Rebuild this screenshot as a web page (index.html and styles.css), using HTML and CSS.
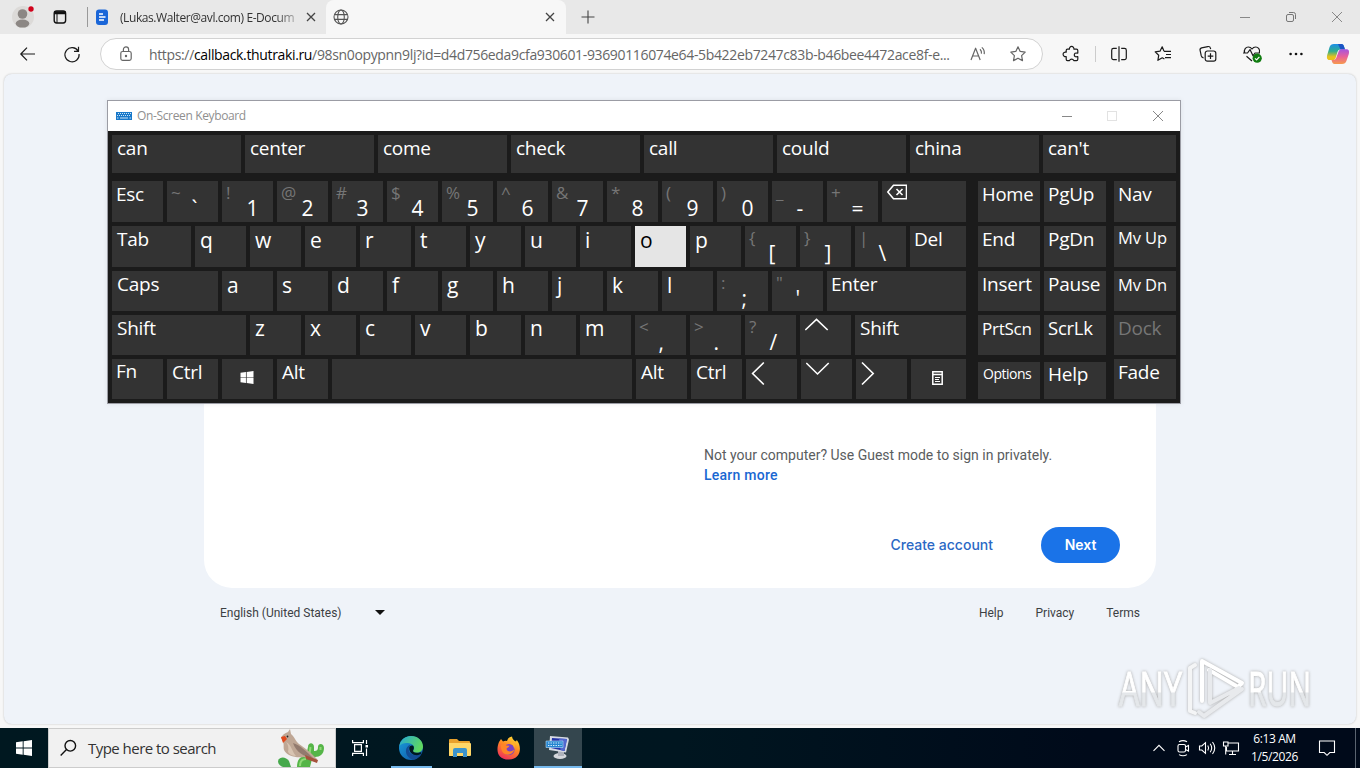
FILE: index.html
```html
<!DOCTYPE html>
<html lang="en">

<head>
    <meta charset="UTF-8">
    <meta name="viewport" content="width=device-width, initial-scale=1.0">
    <title>Desktop</title>
    <link rel="stylesheet" href="styles.css">
</head>

<body>
    <div class="desktop">

        <!-- Tab strip -->
        <div class="tab-strip">
            <div class="profile">
                <svg width="24" height="24" viewBox="0 0 24 24">
                    <circle cx="11" cy="12" r="11" fill="#dcdad8"/>
                    <circle cx="10.500" cy="9" r="4.800" fill="#8c8784"/>
                    <ellipse cx="10.500" cy="18.600" rx="6.800" ry="4" fill="#8c8784"/>
                    <circle cx="19" cy="4" r="3.200" fill="#e8e8e8"/>
                    <circle cx="19" cy="4" r="2.700" fill="#d0021b"/>
                </svg>
            </div>
            <div class="workspaces">
                <svg width="16" height="16" viewBox="0 0 16 16" fill="none" stroke="#111" stroke-width="1.4">
                    <rect x="2.200" y="2" width="11.400" height="12" rx="2.400"/>
                    <path d="M2.200 4.200h11.400M2.200 3.200h11.400" stroke-width="2"/>
                    <path d="M5 5v9" stroke-width="1"/>
                </svg>
            </div>
            <div class="strip-line"></div>
            <div class="tab">
                <svg class="tab-icon" width="14" height="18" viewBox="0 0 14 18">
                    <rect x="1" y="1.500" width="12" height="15.500" rx="3" fill="#1a66d8"/>
                    <path d="M4 6h4M4 9h6.500M4 12h5" stroke="#fff" stroke-width="1.500"/>
                </svg>
                <span class="tab-title">(Lukas.Walter@avl.com) E-Docum</span>
                <svg class="tab-close" width="10" height="10" viewBox="0 0 10 10" stroke="#444" stroke-width="1.300"><path d="M1 1l8 8M9 1l-8 8"/></svg>
            </div>
            <div class="tab tab-active">
                <svg class="globe" width="16" height="16" viewBox="0 0 16 16" fill="none" stroke="#555" stroke-width="1.100">
                    <circle cx="8" cy="8" r="7"/>
                    <ellipse cx="8" cy="8" rx="3.300" ry="7"/>
                    <path d="M1.600 5.600h12.800M1.600 10.400h12.800"/>
                </svg>
                <svg class="tab-close" width="10" height="10" viewBox="0 0 10 10" stroke="#444" stroke-width="1.300"><path d="M1 1l8 8M9 1l-8 8"/></svg>
            </div>
            <svg class="new-tab" width="14" height="14" viewBox="0 0 14 14" stroke="#444" stroke-width="1.100"><path d="M7 .5v13M.5 7h13"/></svg>
            <div class="window-buttons">
                <svg width="12" height="12" viewBox="0 0 12 12" stroke="#888"><path d="M1 6.500h10"/></svg>
                <svg width="12" height="12" viewBox="0 0 12 12" fill="none" stroke="#777"><rect x="1.500" y="3.500" width="7" height="7" rx="1.500"/><path d="M4 1.500h4.500a2 2 0 0 1 2 2V8"/></svg>
                <svg width="12" height="12" viewBox="0 0 12 12" stroke="#888"><path d="M1 1l10 10M11 1L1 11"/></svg>
            </div>
        </div>

        <!-- Toolbar -->
        <div class="toolbar">
            <div class="tool"><svg width="20" height="20" viewBox="0 0 20 20"><path d="M17 10H3.200M9 3.600L2.800 10 9 16.400"/></svg></div>
            <div class="tool"><svg width="20" height="20" viewBox="0 0 20 20"><path d="M16.200 7.200A7.100 7.100 0 1 0 17.100 10M16.500 2.800v4.600H12"/></svg></div>
            <div class="address-bar">
                <svg class="lock" width="16" height="18" viewBox="0 0 16 18"><rect x="2.800" y="6.500" width="10.400" height="8.800" rx="1.800"/><path d="M5.400 6.500V4.400a2.600 2.600 0 0 1 5.200 0v2.100"/><circle cx="8" cy="11" r=".6" fill="#444"/></svg>
                <span class="url">https://<b>callback.thutraki.ru</b>/98sn0opypnn9lj?id=d4d756eda9cfa930601-93690116074e64-5b422eb7247c83b-b46bee4472ace8f-e...</span>
                <svg class="read" width="18" height="18" viewBox="0 0 18 18"><path d="M2 15L6.600 3.200 11.200 15M3.700 11h5.800M11 4.200q1.900 1.800 1.400 4.400M12.800 2.400q3.100 2.600 2.400 6.800"/></svg>
                <svg class="star" width="18" height="18" viewBox="0 0 18 18"><path d="M9 1.800l2.200 4.600 5 .7-3.600 3.500.9 5L9 13.200l-4.500 2.400.9-5L1.800 7.100l5-.7z"/></svg>
            </div>
            <div class="tool"><svg width="20" height="20" viewBox="0 0 20 20"><path d="M7.400 5.200a2.300 2.300 0 1 1 4.500 0h2.600q1.300 0 1.300 1.300v2.600h-1a1.900 1.900 0 1 0 0 3.600h1v2.600q0 1.300-1.300 1.300h-2.700a2.300 2.300 0 0 0-4.300 0H5.400q-1.200 0-1.200-1.300v-2.800a2.300 2.300 0 1 1 0-4.300V6.500q0-1.300 1.200-1.300z"/></svg></div>
            <div class="tool-line"></div>
            <div class="tool"><svg width="20" height="20" viewBox="0 0 20 20"><path d="M10 2.200v15.600M7.800 4.400H4.500a1.800 1.800 0 0 0-1.800 1.800v7.600a1.800 1.800 0 0 0 1.800 1.800h3.300M12.200 4.400h3.300a1.800 1.800 0 0 1 1.800 1.800v7.600a1.800 1.800 0 0 1-1.800 1.800h-3.300"/></svg></div>
            <div class="tool"><svg width="20" height="20" viewBox="0 0 20 20"><path d="M11 7.300h7M13 10.500h5M12 13.700h6M11 7.200L9.200 2.800 7 7.200l-4.800.7 3.500 3.400-.8 5 4.400-2.500 2.100 1.200"/></svg></div>
            <div class="tool"><svg width="20" height="20" viewBox="0 0 20 20"><rect x="7.200" y="7" width="10.600" height="10.200" rx="2.200"/><path d="M12.500 9.300v5.600M9.700 12.100h5.600M5.600 13.800c-1.200-.1-2-.8-2.300-1.900L2.100 6.400c-.3-1.200.4-2.200 1.500-2.500l6.200-1.300c1.300-.3 2.400.5 2.700 1.700l.1.800"/></svg></div>
            <div class="tool"><svg width="20" height="20" viewBox="0 0 20 20"><path d="M2.700 9C1.500 5.400 4 3 6.300 3c1.800 0 3 1 3.700 2 .7-1 1.900-2 3.700-2 2.500 0 4.600 2.500 3.700 5.600M4.500 12.200L10 17M1 9h4.500L8 5.600l3 6.200 2-2.800h5"/><circle cx="15.200" cy="14.200" r="4.600" fill="#107c10" stroke="none"/><path d="M13 14.300l1.600 1.600 2.800-3.100" stroke="#fff"/></svg></div>
            <div class="tool"><svg width="20" height="20" viewBox="0 0 20 20"><g fill="#111" stroke="none"><circle cx="4.600" cy="10" r="1.300"/><circle cx="10" cy="10" r="1.300"/><circle cx="15.400" cy="10" r="1.300"/></g></svg></div>
            <div class="tool copilot">
                <svg width="24" height="24" viewBox="0 0 24 24">
                    <defs>
                        <linearGradient id="cpA" x1="0" y1="0" x2="0" y2="1"><stop offset="0" stop-color="#1d8ee8"/><stop offset=".45" stop-color="#2fae8e"/><stop offset=".8" stop-color="#e8c21c"/></linearGradient>
                        <linearGradient id="cpB" x1="0" y1="0" x2="0" y2="1"><stop offset="0" stop-color="#a453e0"/><stop offset=".5" stop-color="#e8609a"/><stop offset="1" stop-color="#f79a4c"/></linearGradient>
                    </defs>
                    <path d="M8 2h7.500c1.500 0 2 1 2.500 2.500l1 3h-4.500c-2 0-2.600 1-3.200 3l-1.500 5c-.6 2-1.600 2.500-3 2.500H3.500C.8 18 .6 15.500 1.200 13L3.600 5C4.300 3 5.600 2 8 2z" fill="url(#cpA)" stroke="none"/>
                    <path d="M12 2h3.500c1.500 0 2 1 2.500 2.500l1 3h-4.500z" fill="#1b54c4" stroke="none"/>
                    <path d="M16 22H8.500c-1.500 0-2-1-2.500-2.500l-.5-1.500H7c2 0 3-1 3.600-3l1.800-5c.7-2 1.600-2.800 3-2.800h5c2.700 0 3 2.300 2.400 4.800L20.400 19c-.7 2-2 3-4.400 3z" fill="url(#cpB)" stroke="none"/>
                </svg>
            </div>
        </div>

        <!-- Sign in page -->
        <div class="viewport">
            <div class="page">
                <div class="card">
                    <p class="guest">Not your computer? Use Guest mode to sign in privately.<br><a>Learn more</a></p>
                    <div class="actions">
                        <a class="create">Create account</a>
                        <button class="next">Next</button>
                    </div>
                </div>
                <div class="footer">
                    <span class="lang">English (United States)</span>
                    <span class="caret"></span>
                    <div class="links"><span>Help</span><span>Privacy</span><span>Terms</span></div>
                </div>
            </div>
        </div>

        <!-- Taskbar -->
        <div class="taskbar">
            <div class="start">
                <svg width="16" height="16" viewBox="0 0 16 16" fill="#fff"><path d="M0 2.300L6.700 1.300V7.600H0zM7.600 1.200L16 0v7.600H7.600zM0 8.400h6.700v6.300L0 13.700zM7.600 8.400H16V16l-8.400-1.200z"/></svg>
            </div>
            <div class="search">
                <svg width="18" height="18" viewBox="0 0 18 18" fill="none" stroke="#111" stroke-width="1.400"><circle cx="10.300" cy="6.800" r="5.300"/><path d="M6.500 10.600L.7 16.400"/></svg>
                <span>Type here to search</span>
                <svg class="bird" width="50" height="38" viewBox="0 0 50 38">
                    <path d="M1 32c2-5 8-4 11 0l2 6H6c-3-1-5-3-5-6z" fill="#46a94c"/>
                    <path d="M20 38c0-7 3-11 9-11l2-9c0-5 6-5 6 0l0 4c3 0 4-1 4-4 0-4 6-4 6 1 0 6-4 9-9 9l-3 2-2 8z" fill="#55b548"/>
                    <path d="M23 37c0-5 2-7 6-7M33.500 18l-1 7M43.500 18v3" stroke="#8fd976" stroke-width="2" fill="none"/>
                    <path d="M4 9c1-3 4-5 7-6l2-3 1 5c4 3 4 7 8 10 6 4 10 7 18 15l-1 3-12-5c-9 1-17-1-20-7-1-4 1-7-3-12z" fill="#bfa795"/>
                    <path d="M16 14c7 2 13 8 20 15-9-1-17-6-20-15z" fill="#927a6e"/>
                    <path d="M9 13c2 2 3 6 2 10 2 3 5 4 8 4-4-4-4-11-10-14z" fill="#d8c4b2"/>
                    <path d="M4 8l4-1 2 3-4 4z" fill="#e0481c"/>
                    <circle cx="10.500" cy="7.500" r=".9" fill="#222"/>
                    <path d="M28 26l13 5-1 3-11-4z" fill="#a5523c"/>
                </svg>
            </div>
            <div class="task">
                <svg width="18" height="18" viewBox="0 0 18 18" fill="none" stroke="#fff" stroke-width="1.200"><path d="M.6 1v2.600h10.800V1M.6 17v-2.600h10.800V17M2.600 5.600h6.800v6.800H2.600zM14.500 1v4M14.500 9.500V17"/><path d="M13.500 6h2.500v2.500h-2.500z" fill="#fff" stroke="none"/></svg>
            </div>
            <div class="task task-edge">
                <svg width="26" height="26" viewBox="0 0 26 26">
                    <defs>
                        <linearGradient id="edA" x1="0" y1="0" x2="1" y2=".4"><stop offset="0" stop-color="#25a8d8"/><stop offset="1" stop-color="#5fd860"/></linearGradient>
                        <linearGradient id="edB" x1="0" y1="0" x2="1" y2="1"><stop offset="0" stop-color="#1ba0dd"/><stop offset="1" stop-color="#0d4fa0"/></linearGradient>
                    </defs>
                    <circle cx="13" cy="13" r="12" fill="url(#edB)"/>
                    <path d="M1.300 11C2.500 4.500 7.500 1 13 1c7 0 12 5 12 10.500 0 4-3 6.300-6.500 6.300-3 0-4.300-1.200-3.200-2.700 1.600-2.500.2-6-4-6.800C7 7.500 3.500 8.500 1.300 11z" fill="url(#edA)"/>
                    <path d="M11.500 10c-4 2-5 8-1 12 2 2 4.500 2.800 6 2.500 3-.9 5-2.600 6.300-4.700.3-.5-.1-.9-.6-.6-5 2.500-11.500 0-11.500-5 0-1.800.5-3.200 1.800-4z" fill="#134c94"/>
                    <path d="M11.200 13c0 5.800 6 8.700 11 6.300.7-.3 2-2 .4-2.100-5 1.500-8.500.2-7.300-2.100.9-1.500.8-3.300-.1-4.400-2-.9-4 .3-4 2.300z" fill="#001820"/>
                </svg>
            </div>
            <div class="task">
                <svg width="24" height="22" viewBox="0 0 24 22"><path d="M1 3q0-1 1-1h7l2 2h10q1 0 1 1v14H1z" fill="#e9a12c"/><path d="M1 6h21q1 0 1 1v11q0 1-1 1H2q-1 0-1-1z" fill="#ffd768"/><path d="M5 20v-7q0-2 2-2h10q2 0 2 2v7h-4v-4H9v4z" fill="#3c94cc"/></svg>
            </div>
            <div class="task">
                <svg width="24" height="24" viewBox="0 0 24 24">
                    <defs><linearGradient id="ff" x1=".8" y1="0" x2=".3" y2="1"><stop offset="0" stop-color="#ffe035"/><stop offset=".45" stop-color="#ff8a23"/><stop offset="1" stop-color="#f0305a"/></linearGradient></defs>
                    <path d="M2 6l2-3 2 2.500Q8 4.500 10 5q1-4 5-4.500.5 3.500 4 5l.8-1.500C25 10 24.500 23.500 12 23.500-.5 23.500-1 13 2 6z" fill="url(#ff)"/>
                    <circle cx="12" cy="13.500" r="5.600" fill="#7941c6"/>
                    <path d="M4 9c2-1 4-.8 5.500.5l3 .3c-.5 1.700-2.500 2-3 3 .5 3.200 5 3.500 7.500.7-.5 5.500-8 7-11.500 2.500Q3.500 13 4 9z" fill="#ff8527"/>
                    <path d="M13 7q4 1.500 4 6 2-4-1-8z" fill="#ffb22c"/>
                </svg>
            </div>
            <div class="task task-active">
                <svg width="26" height="26" viewBox="0 0 26 26">
                    <ellipse cx="15" cy="21" rx="6.500" ry="3" fill="#d5d8dc"/>
                    <path d="M13 16h6v5h-6z" fill="#aeb2bb"/>
                    <path d="M5 1l18 1.500 1 2-3 13L4 15z" fill="#d7dbe4"/>
                    <path d="M7 3l15 1-2.500 12L6 13z" fill="#2433a7"/>
                    <path d="M14 3.500l8 .5-2.500 12-4-1z" fill="#5268cf"/>
                    <path d="M1 6h17v6.500H1z" fill="#2586d0" stroke="#b9dcf6" stroke-width=".6"/>
                    <path d="M3 8h13.500M3 10.500h13.500" stroke="#d9edff" stroke-width="1" stroke-dasharray="1.400 1.100"/>
                </svg>
            </div>
            <div class="tray">
                <svg width="24" height="16" viewBox="0 0 24 16"><path d="M6.500 10.800L12 5.300l5.500 5.500"/></svg>
                <svg width="24" height="18" viewBox="0 0 24 18"><rect x="7" y="5.500" width="7.500" height="7.500" rx="1.500"/><path d="M14.500 8l3-1.500V12l-3-1.500M8 2.800q4-2.400 8 0M8 15.600q4 2.400 8 0"/></svg>
                <svg width="24" height="18" viewBox="0 0 24 18"><path d="M4.500 7v4h2.300l3.700 3.300V3.700L6.800 7zM12.800 6.500q1.600 2.500 0 5M15.200 4.700q3 4.300 0 8.600M17.500 3q4.500 6 0 12"/></svg>
                <svg width="24" height="18" viewBox="0 0 24 18"><path d="M9 4h10.500v8H7.500V8M13.500 12v3.500M10 15.500h7M4.500 3H9v4H4.500zM6.700 7v8.500"/></svg>
                <div class="clock">6:13 AM<br>1/5/2026</div>
                <svg class="notice" width="20" height="20" viewBox="0 0 20 20"><path d="M2.500 3h15v11.500h-4.700L10 17.300l-2.800-2.800H2.500z"/></svg>
                <div class="peek"></div>
            </div>
        </div>

        <!-- On-Screen Keyboard window -->
        <div class="osk">
            <div class="osk-title">
                <svg width="16" height="8" viewBox="0 0 16 8"><path d="M0 0h16v8H0z" fill="#1979ca"/><path d="M2 1.500h13M1 3.500h14" stroke="#cfe4f5" stroke-dasharray="1 1"/><path d="M4 6h8M1 6h1.500M13.500 6H15" stroke="#cfe4f5"/></svg>
                <span>On-Screen Keyboard</span>
                <div class="osk-buttons">
                    <svg width="12" height="12" viewBox="0 0 12 12" stroke="#888"><path d="M1 6.500h10"/></svg>
                    <svg width="12" height="12" viewBox="0 0 12 12" fill="none" stroke="#e2e2e2"><rect x="1.500" y="1.500" width="9" height="9"/></svg>
                    <svg width="12" height="12" viewBox="0 0 12 12" stroke="#888"><path d="M1 1l10 10M11 1L1 11"/></svg>
                </div>
            </div>
            <div class="keys">
                <div class="words">
                    <div class="key">can</div>
                    <div class="key">center</div>
                    <div class="key">come</div>
                    <div class="key">check</div>
                    <div class="key">call</div>
                    <div class="key">could</div>
                    <div class="key">china</div>
                    <div class="key">can't</div>
                </div>

                <div class="row">
                    <div class="key k-esc">Esc</div>
                    <div class="key dual"><i>~</i><span>`</span></div>
                    <div class="key dual"><i>!</i><span>1</span></div>
                    <div class="key dual"><i>@</i><span>2</span></div>
                    <div class="key dual"><i>#</i><span>3</span></div>
                    <div class="key dual"><i>$</i><span>4</span></div>
                    <div class="key dual"><i>%</i><span>5</span></div>
                    <div class="key dual"><i>^</i><span>6</span></div>
                    <div class="key dual"><i>&amp;</i><span>7</span></div>
                    <div class="key dual"><i>*</i><span>8</span></div>
                    <div class="key dual"><i>(</i><span>9</span></div>
                    <div class="key dual"><i>)</i><span>0</span></div>
                    <div class="key dual"><i>_</i><span>-</span></div>
                    <div class="key dual"><i>+</i><span>=</span></div>
                    <div class="key wide">
                        <svg width="20" height="20" viewBox="0 0 20 20"><path d="M6.500 4.300h13v13.500h-13L.8 11z"/><path d="M9.500 8l6 6M15.500 8l-6 6"/></svg>
                    </div>
                    <div class="key nav k-home">Home</div>
                    <div class="key nav2">PgUp</div>
                    <div class="key nav3">Nav</div>
                </div>

                <div class="row">
                    <div class="key tab-key">Tab</div>
                    <div class="key letter">q</div>
                    <div class="key letter">w</div>
                    <div class="key letter">e</div>
                    <div class="key letter">r</div>
                    <div class="key letter">t</div>
                    <div class="key letter">y</div>
                    <div class="key letter">u</div>
                    <div class="key letter">i</div>
                    <div class="key letter pressed">o</div>
                    <div class="key letter">p</div>
                    <div class="key dual bracket"><i>{</i><span>[</span></div>
                    <div class="key dual"><i>}</i><span>]</span></div>
                    <div class="key dual bracket"><i>|</i><span>\</span></div>
                    <div class="key wide k-del">Del</div>
                    <div class="key nav">End</div>
                    <div class="key nav2">PgDn</div>
                    <div class="key nav3 k-mvup">Mv Up</div>
                </div>

                <div class="row short">
                    <div class="key caps-key">Caps</div>
                    <div class="key letter">a</div>
                    <div class="key letter">s</div>
                    <div class="key letter">d</div>
                    <div class="key letter">f</div>
                    <div class="key letter">g</div>
                    <div class="key letter">h</div>
                    <div class="key letter">j</div>
                    <div class="key letter">k</div>
                    <div class="key letter">l</div>
                    <div class="key dual"><i>:</i><span>;</span></div>
                    <div class="key dual bracket"><i>"</i><span>'</span></div>
                    <div class="key wide k-enter">Enter</div>
                    <div class="key nav">Insert</div>
                    <div class="key nav2">Pause</div>
                    <div class="key nav3 k-mvdn">Mv Dn</div>
                </div>

                <div class="row short lower">
                    <div class="key shift-key">Shift</div>
                    <div class="key letter">z</div>
                    <div class="key letter">x</div>
                    <div class="key letter">c</div>
                    <div class="key letter">v</div>
                    <div class="key letter">b</div>
                    <div class="key letter">n</div>
                    <div class="key letter">m</div>
                    <div class="key dual bracket"><i>&lt;</i><span>,</span></div>
                    <div class="key dual bracket"><i>&gt;</i><span>.</span></div>
                    <div class="key dual"><i>?</i><span>/</span></div>
                    <div class="key"><svg width="24" height="20" viewBox="0 0 24 20"><path d="M.3 15L11.500 4.300 22.700 15"/></svg></div>
                    <div class="key wide">Shift</div>
                    <div class="key nav k-prt">PrtScn</div>
                    <div class="key nav2 k-scr">ScrLk</div>
                    <div class="key nav3 disabled">Dock</div>
                </div>

                <div class="row short">
                    <div class="key k-fn">Fn</div>
                    <div class="key">Ctrl</div>
                    <div class="key icon-key"><svg width="14" height="13" viewBox="0 0 16 16"><path class="solid" d="M0 2.300L6.700 1.300V7.600H0zM7.600 1.200L16 0v7.600H7.600zM0 8.400h6.700v6.300L0 13.700zM7.600 8.400H16V16l-8.400-1.200z"/></svg></div>
                    <div class="key">Alt</div>
                    <div class="key space-key"></div>
                    <div class="key">Alt</div>
                    <div class="key">Ctrl</div>
                    <div class="key"><svg width="24" height="28" viewBox="0 0 24 28"><path d="M12.800 3.500L1.600 14.500 12.800 25.500"/></svg></div>
                    <div class="key"><svg width="24" height="20" viewBox="0 0 24 20"><path d="M.3 4L11.500 15 22.700 4"/></svg></div>
                    <div class="key"><svg width="24" height="28" viewBox="0 0 24 28"><path d="M1 3.500l11.200 11L1 25.500"/></svg></div>
                    <div class="key wide icon-key"><svg width="11" height="14" viewBox="0 0 11 14"><path d="M.8.800h9.400v12.400H.8zM.8 3.500h9.400" stroke-width="1.500"/><path d="M3 6.500h5M3 8.500h4M3 10.500h5" stroke-width="1"/></svg></div>
                    <div class="key nav low k-opt">Options</div>
                    <div class="key nav2 low k-help">Help</div>
                    <div class="key nav3">Fade</div>
                </div>
            </div>
        </div>

        <!-- Watermark -->
        <svg class="watermark" width="204" height="70" viewBox="0 0 204 70">
            <defs>
                <linearGradient id="wm" x1="0" y1="0" x2="0" y2="1"><stop offset=".56" stop-color="#fff"/><stop offset=".58" stop-color="#e4e7ea"/></linearGradient>
            </defs>
            <g fill="url(#wm)" stroke="url(#wm)">
                <text x="7" y="53" textLength="63" lengthAdjust="spacingAndGlyphs">ANY</text>
                <text x="136" y="53" textLength="63" lengthAdjust="spacingAndGlyphs">RUN</text>
            </g>
            <g fill="none" stroke="#fff" stroke-width="4" stroke-linejoin="round" stroke-linecap="round">
                <path d="M83 12l-5 3v43l5 2" stroke="#f4f5f6"/>
                <path d="M90 48V8l40 22-4 4-29-17"/>
                <path d="M98 17v33l29-15M130 36L92 63l-5-4" stroke="#e8eaed"/>
            </g>
        </svg>
    </div>
</body>

</html>
```
FILE: styles.css
```css
* {
    box-sizing: border-box;
}

body {
    margin: 0;
    font-family: "Open Sans", "Noto Sans", sans-serif;
}

svg {
    display: block;
    flex: none;
}

.desktop {
    position: relative;
    width: 1360px;
    height: 768px;
    overflow: hidden;
    background: #f7f7f7;
    display: flex;
    flex-direction: column;
}

/* Tab strip */
.tab-strip {
    display: flex;
    align-items: center;
    height: 34px;
    background: #e8e8e8;
}

.profile {
    width: 44px;
    padding-left: 12px;
}

.workspaces {
    width: 43px;
    padding-left: 8px;
}

.strip-line {
    width: 1px;
    height: 20px;
    background: #999;
}

.tab {
    display: flex;
    align-items: center;
    width: 238px;
    height: 34px;
    padding: 0 10px 0 7px;
}

.tab-title {
    width: 180px;
    margin-left: 11px;
    margin-right: auto;
    white-space: nowrap;
    font-size: 12px;
    letter-spacing: -0.42px;
    color: #333;
    -webkit-mask-image: linear-gradient(90deg, #000 155px, rgba(0, 0, 0, 0.2) 179px);
    mask-image: linear-gradient(90deg, #000 155px, rgba(0, 0, 0, 0.2) 179px);
}

.tab-active {
    width: 240px;
    justify-content: space-between;
    padding: 0 11px 0 7px;
    background: #f7f7f7;
    border-radius: 8px 8px 0 0;
}

.new-tab {
    margin-left: 15px;
}

.window-buttons {
    display: flex;
    margin-left: auto;
}

.window-buttons svg {
    margin: 0 17px;
}

/* Toolbar */
.toolbar {
    display: flex;
    align-items: center;
    height: 40px;
    padding-left: 6px;
}

.toolbar svg {
    fill: none;
    stroke: #1b1b1b;
    stroke-width: 1.2;
    stroke-linejoin: round;
}

.tool {
    display: flex;
    justify-content: center;
    width: 44.2px;
}

.tool-line {
    width: 1px;
    height: 16px;
    margin: 0 1px 0 1px;
    background: #ccc;
}

.copilot {
    width: 40px;
}

.address-bar {
    display: flex;
    align-items: center;
    width: 943px;
    height: 32px;
    margin: 0 7px 0 5.6px;
    padding-left: 17px;
    background: #fff;
    border: 1px solid #d2d2d2;
    border-radius: 16px;
}

.address-bar svg {
    stroke: #666;
}

.url {
    width: 806px;
    margin-left: 15px;
    font-size: 14px;
    letter-spacing: -0.35px;
    white-space: nowrap;
    color: #666;
}

.url b {
    font-weight: 400;
    color: #000;
}

.read {
    margin-left: 14px;
}

.star {
    margin-left: 22px;
}

/* Sign in page */
.viewport {
    height: 650px;
    margin: 0 4px;
    background: #eff3f9;
    border-radius: 8px;
    box-shadow: 0 0 2px #bbb;
    display: flex;
    justify-content: center;
}

.page {
    width: 952px;
    padding-top: 60px;
    font-family: Roboto, sans-serif;
}

.card {
    height: 454px;
    padding: 311px 36px 0 500px;
    background: #fff;
    border-radius: 28px;
}

.guest {
    margin: 0;
    font-size: 14px;
    line-height: 20px;
    color: #5a5d60;
    white-space: nowrap;
}

.guest a {
    color: #1967d2;
    font-weight: 500;
    letter-spacing: 0.25px;
}

.actions {
    display: flex;
    justify-content: flex-end;
    align-items: center;
    margin-top: 42px;
}

.create {
    margin-right: 48px;
    padding-bottom: 2px;
    color: #2b68c5;
    font: 500 14px Inter, sans-serif;
}

.next {
    width: 79px;
    height: 36px;
    padding: 0 0 2px;
    border: none;
    border-radius: 18px;
    background: #1a73e8;
    color: #fff;
    font: 600 14px Inter, sans-serif;
}

.footer {
    display: flex;
    align-items: center;
    height: 49px;
    padding: 0 16px;
    font-size: 12px;
    color: #3c4043;
}

.caret {
    margin-left: 33px;
    border: 5px solid transparent;
    border-top-color: #111;
    border-bottom: none;
}

.links {
    display: flex;
    gap: 32px;
    margin-left: auto;
}

/* Taskbar */
.taskbar {
    display: flex;
    align-items: center;
    height: 40px;
    margin-top: 4px;
    background: linear-gradient(90deg, #001820 0, #001620 50%, #000a1a 80%);
}

.start {
    display: flex;
    justify-content: center;
    width: 48px;
}

.search {
    display: flex;
    align-items: center;
    width: 288px;
    height: 40px;
    padding-left: 11px;
    border: 1px solid #ccc;
    background: #f1f1f1;
    font-size: 15px;
    letter-spacing: -0.53px;
    color: #333;
}

.search span {
    margin-left: 10px;
    white-space: nowrap;
}

.bird {
    margin-left: auto;
    margin-right: 8px;
}

.task {
    display: flex;
    align-items: center;
    justify-content: center;
    width: 49px;
    height: 40px;
}

.task-edge {
    width: 41px;
    margin: 0 3px 0 6px;
    border-bottom: 2px solid #76b9ed;
    padding: 2px 1px 0 0;
}

.task-active {
    width: 48px;
    margin-left: 1px;
    padding-top: 2px;
    background: #34464e;
    border-bottom: 2px solid #76b9ed;
}

.tray {
    display: flex;
    align-items: center;
    height: 40px;
    margin-left: auto;
}

.tray svg {
    fill: none;
    stroke: #fff;
    stroke-width: 1.1;
}

.clock {
    width: 64px;
    padding-right: 1px;
    font-size: 12px;
    line-height: 18px;
    letter-spacing: -0.4px;
    text-align: center;
    color: #fff;
}

.tray .notice {
    margin: 0 18px 0 10px;
}

.peek {
    width: 5px;
    height: 40px;
    border-left: 1px solid #5a6470;
}

/* On-Screen Keyboard window */
.osk {
    position: absolute;
    left: 107px;
    top: 100px;
    width: 1074px;
    height: 304px;
    border: 1px solid #9b9ca4;
    background: #1b1b1b;
    box-shadow: 0 0 5px rgba(0, 0, 0, 0.08);
}

.osk-title {
    display: flex;
    align-items: center;
    height: 30px;
    padding: 0 16.5px 1px 8px;
    background: #fff;
    font-size: 12px;
    letter-spacing: -0.36px;
    color: #8f8f8f;
}

.osk-title span {
    margin-left: 5px;
}

.osk-buttons {
    display: flex;
    gap: 33.5px;
    margin-left: auto;
}

.keys {
    padding: 4px;
}

.words,
.row {
    display: flex;
    gap: 4px;
}

.words {
    height: 38px;
    margin-bottom: 8px;
}

.words .key {
    width: 129px;
}

.words .key:last-child {
    width: 133px;
}

.row {
    height: 41px;
    margin-bottom: 4px;
}

.short {
    height: 40px;
}

.key {
    flex: none;
    width: 51px;
    padding-left: 5px;
    background: #333;
    color: #fff;
    font-size: 19px;
    line-height: 26px;
    letter-spacing: -0.25px;
    white-space: nowrap;
}

.key svg {
    fill: none;
    stroke: #fff;
    stroke-width: 1.6;
}

.key .solid {
    fill: #fff;
    stroke: none;
}

.letter {
    font-size: 21px;
    line-height: 28px;
}

.lower .letter {
    line-height: 27px;
}

.pressed {
    background: #e5e5e5;
    color: #000;
}

.dual {
    display: flex;
    padding-left: 4px;
    letter-spacing: 0;
}

.dual i {
    width: 20.5px;
    font-size: 17px;
    font-style: normal;
    line-height: 24px;
    color: #767676;
}

.dual span {
    font-size: 21px;
    line-height: 54px;
}

.bracket i {
    width: 19.5px;
}

.icon-key {
    display: flex;
    align-items: center;
    justify-content: center;
    padding: 0 2px 3px 0;
}

/* stretches up to the navigation columns */
.wide {
    flex: 1;
}

.tab-key {
    width: 79px;
}

.caps-key {
    width: 106px;
}

.shift-key {
    width: 134px;
}

.space-key {
    width: 300px;
}

.nav,
.nav2,
.nav3 {
    width: 62px;
    padding-left: 4px;
}

.k-esc,
.k-fn,
.k-del,
.k-enter {
    padding-left: 4px;
}

.k-fn {
    line-height: 25px;
}

.nav {
    margin-left: 8px;
}

.nav3 {
    margin-left: 4px;
}

.low {
    margin-top: 3px;
}

.k-home {
    font-size: 18.5px;
}

.k-mvup,
.k-mvdn {
    font-size: 16.5px;
    letter-spacing: -0.1px;
}

.k-mvup {
    line-height: 23px;
}

.k-mvdn {
    line-height: 28px;
}

.k-prt {
    font-size: 17px;
    line-height: 27px;
}

.k-scr {
    font-size: 18.5px;
}

.k-opt {
    padding-left: 5px;
    font-size: 14px;
    letter-spacing: -0.5px;
    line-height: 24px;
}

.k-help {
    line-height: 24px;
}

.disabled {
    color: #767676;
}

/* Watermark */
.watermark {
    position: absolute;
    left: 1112px;
    top: 653px;
    filter: drop-shadow(0 0 1.5px #aaa);
}

.watermark text {
    font-family: "Open Sans", sans-serif;
    font-size: 47px;
}
```
